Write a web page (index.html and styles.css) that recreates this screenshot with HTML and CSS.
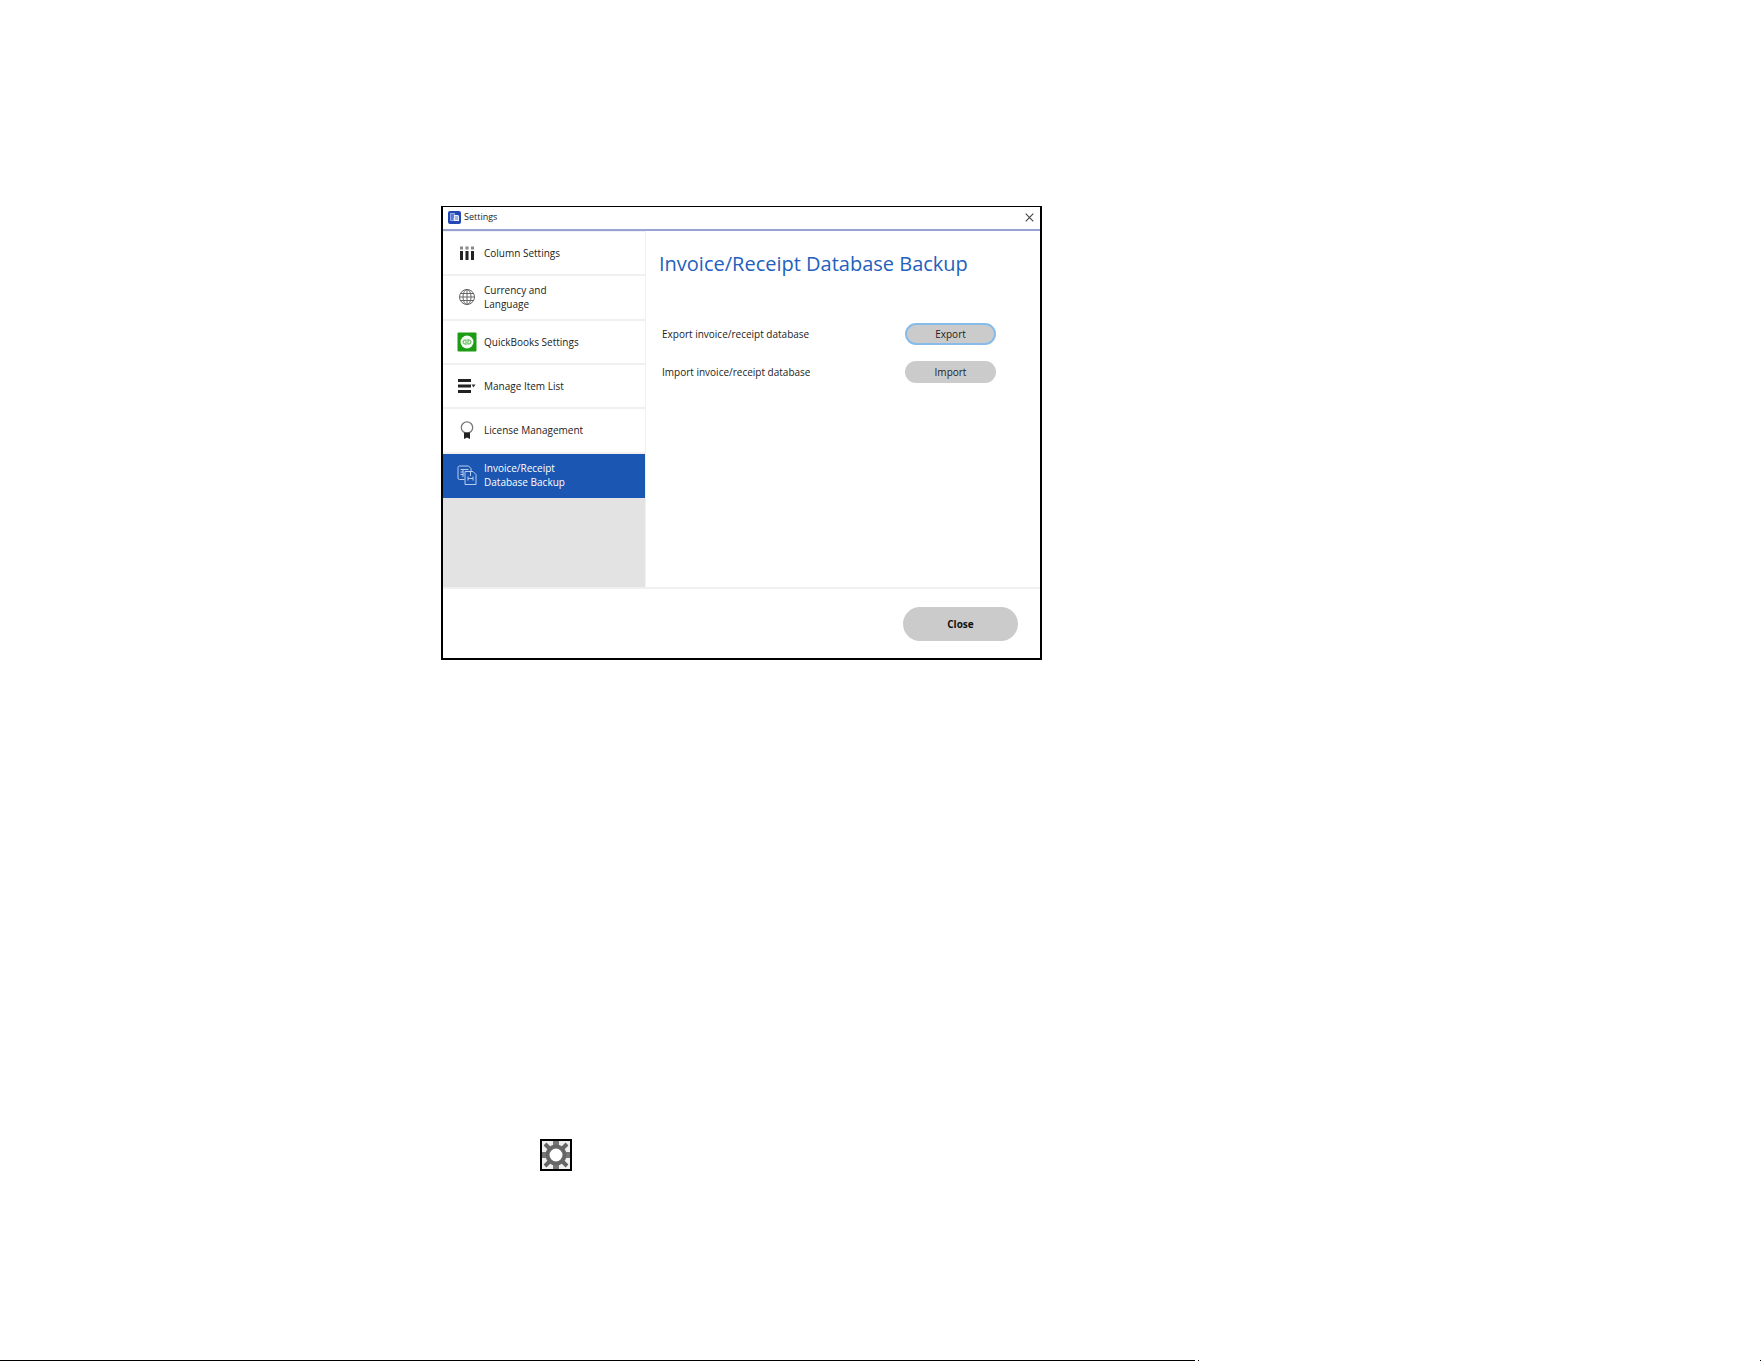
FILE: index.html
```html
<!DOCTYPE html>
<html lang="en">
<head>
<meta charset="utf-8">
<title>Settings</title>
<link rel="stylesheet" href="styles.css">
</head>
<body>
<main class="page">
  <section class="dialog" role="dialog" aria-label="Settings">
    <header class="titlebar">
      <svg class="app-icon" viewBox="0 0 13 13" aria-hidden="true">
        <rect width="13" height="13" rx="2" fill="#2347b5"/>
        <path d="M2 2h5v8H2z" fill="#8fa9e8"/>
        <path d="M3 4h3M3 6h3M3 8h2" stroke="#2347b5"/>
        <path d="M6 4h4l1 1v5H6z" fill="#e8eefc"/>
        <path d="M7 6h3M7 8h3" stroke="#5f7fd6"/>
      </svg>
      <span class="titlebar-text">Settings</span>
      <button class="window-close" type="button" aria-label="Close window">
        <svg viewBox="0 0 9 9" aria-hidden="true"><path d="M.7.7l7.6 7.6M8.300.7L.7 8.300" stroke="#444" stroke-width="1.100"/></svg>
      </button>
    </header>
    <div class="body">
      <nav class="sidebar">
        <ul class="nav">
          <li><a class="nav-link" href="#columns">
            <svg class="nav-icon" viewBox="0 0 20 20" aria-hidden="true">
              <path d="M4.500 8v9M10 8v9M15.500 8v9" stroke="#222" stroke-width="3"/>
              <path d="M4.500 3.500v3M10 3.500v3M15.500 3.500v3" stroke="#888" stroke-width="3"/>
            </svg><span>Column Settings</span></a></li>
          <li><a class="nav-link" href="#currency">
            <svg class="nav-icon" viewBox="0 0 20 20" fill="none" stroke="#666" aria-hidden="true">
              <circle cx="10" cy="10" r="7.500"/><ellipse cx="10" cy="10" rx="4" ry="7.500"/>
              <path d="M10 2.500v15M2.500 10h15M3.500 6.500h13M3.500 13.500h13"/>
            </svg><span>Currency and<br>Language</span></a></li>
          <li><a class="nav-link" href="#quickbooks">
            <svg class="nav-icon" viewBox="0 0 20 20" aria-hidden="true">
              <rect x=".5" y=".5" width="19" height="19" rx="1" fill="#1b9c13"/>
              <circle cx="10" cy="10" r="6.500" fill="#f4fbf3"/>
              <path d="M8.500 8H8a2 2 0 0 0 0 4h.5M9 7.500V13M11.500 12h.5a2 2 0 0 0 0-4h-.5M11 7v5.500" fill="none" stroke="#4fb449"/>
            </svg><span>QuickBooks Settings</span></a></li>
          <li><a class="nav-link" href="#items">
            <svg class="nav-icon" viewBox="0 0 20 20" aria-hidden="true">
              <path d="M1 4.500h13M1 10h13M1 15.500h13" stroke="#222" stroke-width="3"/>
              <path d="M14.500 8.500h4l-2 3z" fill="#333"/>
            </svg><span>Manage Item List</span></a></li>
          <li><a class="nav-link" href="#license">
            <svg class="nav-icon" viewBox="0 0 20 20" aria-hidden="true">
              <circle cx="10" cy="7.500" r="5.700" fill="none" stroke="#777" stroke-width="1.300"/>
              <path d="M7 12.500h6V19l-3-1.500L7 19z" fill="#222"/>
            </svg><span>License Management</span></a></li>
          <li><a class="nav-link nav-link-active" href="#backup" aria-current="page">
            <svg class="nav-icon" viewBox="0 0 20 20" fill="none" stroke="#b9cdf0" aria-hidden="true">
              <path d="M7.500 14.500h-5Q1 14.500 1 13V2.500Q1 1 2.500 1h9L14 3.500V6M3.500 4.500h8M3.500 7h3M3.500 9.500h3M6 4.500V12"/>
              <path d="M8 6.500h8l3 3v10H8zM13.500 7v4M11 11.500v4M11 13.500h5M16 11.500v4"/>
            </svg><span>Invoice/Receipt<br>Database Backup</span></a></li>
        </ul>
      </nav>
      <div class="content">
        <h1 class="heading">Invoice/Receipt Database Backup</h1>
        <div class="row">
          <label for="export">Export invoice/receipt database</label>
          <button class="pill pill-focused" id="export" type="button">Export</button>
        </div>
        <div class="row">
          <label for="import">Import invoice/receipt database</label>
          <button class="pill" id="import" type="button">Import</button>
        </div>
      </div>
    </div>
    <footer class="actions">
      <button class="pill pill-large" type="button">Close</button>
    </footer>
  </section>
  <button class="gear" type="button" aria-label="Settings">
    <svg viewBox="0 0 28 28" aria-hidden="true">
      <rect width="28" height="28" fill="#f0f0f0"/>
      <path d="M14 0v28M0 14h28" stroke="#777" stroke-width="6"/>
      <path d="M3 3l22 22M25 3L3 25" stroke="#666" stroke-width="4"/>
      <circle cx="14" cy="14" r="8.500" fill="#fff" stroke="#666" stroke-width="4"/>
    </svg>
  </button>
</main>
<div class="page-rule"><span class="rule-line"></span><span class="rule-dot"></span><span class="rule-dot rule-end"></span></div>
</body>
</html>
```
FILE: styles.css
```css
* { box-sizing: border-box; }
body {
  margin: 0;
  min-height: 100vh;
  display: flex;
  flex-direction: column;
  background: #fff;
  color: #222;
  font: 10px/14px "Open Sans", "Noto Sans", sans-serif;
}
button { font: inherit; color: inherit; padding: 0; cursor: pointer; }
svg { display: block; }
.page { flex: 1; padding: 206px 25% 0 441px; }

.dialog {
  width: 100%;
  max-width: 601px;
  border: 2px solid #000;
  border-top-width: 1px;
  display: flex;
  flex-direction: column;
}
.titlebar {
  height: 24px;
  display: flex;
  align-items: center;
  gap: 3px;
  padding: 0 6px 2px 5px;
  border-bottom: 2px solid #98a2d4;
}
.app-icon { width: 13px; height: 13px; }
.titlebar-text { font-size: 9px; }
.window-close { margin-left: auto; border: 0; background: none; }
.window-close svg { width: 9px; height: 9px; }

.body { display: flex; min-height: 358px; border-bottom: 2px solid #f0f0f0; }
.sidebar { flex: 0 0 203px; background: #e3e3e3; border-right: 1px solid #f0f0f0; }
.nav {
  height: 267px;
  margin: 0;
  padding: 0;
  border-top: 1px solid #f0f0f0;
  list-style: none;
  display: flex;
  flex-direction: column;
}
.nav li { flex: 1; display: flex; }
.nav-link {
  flex: 1;
  display: flex;
  align-items: center;
  gap: 7px;
  padding-left: 14px;
  background: #fff;
  border-bottom: 2px solid #f0f0f0;
  color: inherit;
  text-decoration: none;
}
.nav-icon { width: 20px; height: 20px; }
.nav-link-active { background: #1a56b2; border-color: #1a56b2; color: #fff; }

.content { flex: 1; padding: 18px 44px 0 13px; }
.heading {
  margin: 0 0 39px;
  font-size: 20px;
  line-height: 30px;
  font-weight: 400;
  color: #2460bd;
  white-space: nowrap;
}
.row {
  display: flex;
  align-items: center;
  justify-content: space-between;
  height: 32px;
  margin-bottom: 6px;
  padding-left: 3px;
}
.pill {
  width: 91px;
  height: 22px;
  border: 0;
  border-radius: 16px;
  background: #cbcbcb;
}
.pill-focused { border: 2px solid #86bbea; }
.actions {
  display: flex;
  justify-content: flex-end;
  padding: 18px 22px 17px;
}
.pill-large { width: 115px; height: 34px; border-radius: 17px; color: #111; font-weight: 700; }

.gear {
  display: block;
  width: 32px;
  height: 32px;
  margin: 479px 0 0 99px;
  border: 2px solid #000;
  background: #fff;
}

.page-rule { display: flex; gap: 3px; height: 1px; }
.rule-line { width: 1195px; background: #000; }
.rule-dot { width: 1px; background: #000; }
.rule-end { margin-left: auto; }
```
